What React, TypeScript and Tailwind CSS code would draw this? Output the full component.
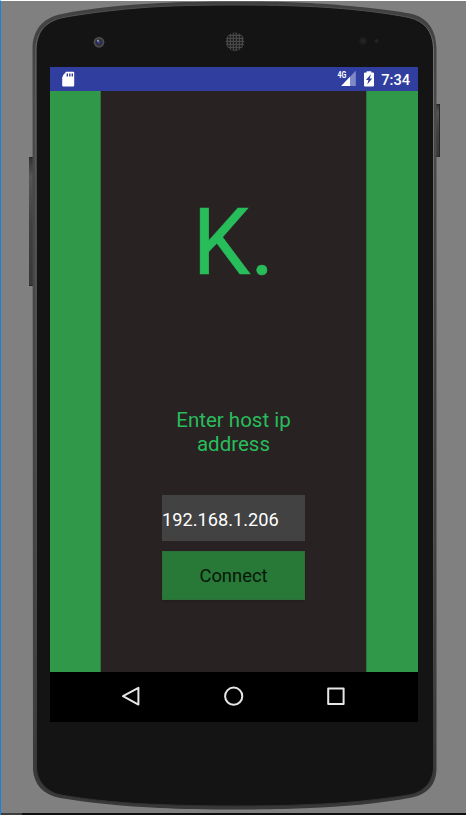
import React from "react";

const outer =
  "M32.5 48 C33 30 42 18 62 14 C90 8 130 4.5 160 3 C200 1 270 1 310 3 C345 5 385 9 410 13.5 C427 17 436 29 436.5 48 L436.5 770 C436 784 428 794 412 797.5 C380 803.5 340 807 310 808 C270 810 200 810 160 808 C125 806.5 90 803 60 798 C43 795 34 784 33 770 Z";
const inner =
  "M36 48 C37 32 45 21.5 63 17.5 C90 12.5 130 8 160 6.5 C200 4.5 270 4.5 310 6.5 C345 8 385 12.5 409 17.5 C424 21 433 31 433.5 48 L433.5 768 C433 781 425 791.5 411 794.5 C380 800 340 803.5 310 804.5 C270 806.5 200 806.5 160 804.5 C125 803.5 90 800 61 795 C46 792 37 781 36.5 768 Z";

function PhoneBody() {
  return (
    <svg className="absolute inset-0" width="466" height="815" viewBox="0 0 466 815" aria-hidden="true">
      <defs>
        <linearGradient id="rim" x1="0" y1="0" x2="0" y2="1">
          <stop offset="0" stopColor="#404040" />
          <stop offset="0.12" stopColor="#4a4a4a" />
          <stop offset="0.8" stopColor="#404040" />
          <stop offset="1" stopColor="#383838" />
        </linearGradient>
        <linearGradient id="edge" x1="0" y1="0" x2="0" y2="1">
          <stop offset="0" stopColor="#4a4a4a" />
          <stop offset="0.05" stopColor="#707072" />
          <stop offset="0.3" stopColor="#6a6a6c" />
          <stop offset="0.7" stopColor="#505050" />
          <stop offset="1" stopColor="#303030" />
        </linearGradient>
        <linearGradient id="key" x1="0" y1="0" x2="0" y2="1">
          <stop offset="0" stopColor="#303030" />
          <stop offset="0.15" stopColor="#555" />
          <stop offset="0.5" stopColor="#404242" />
          <stop offset="1" stopColor="#363838" />
        </linearGradient>
        <pattern id="mesh" width="3" height="3" patternUnits="userSpaceOnUse">
          <rect width="3" height="3" fill="#484848" />
          <rect width="1.8" height="1.8" fill="#191919" />
        </pattern>
        <radialGradient id="lens">
          <stop offset="0" stopColor="#4a52b8" />
          <stop offset="0.35" stopColor="#25274f" />
          <stop offset="0.65" stopColor="#3a3a3c" />
          <stop offset="1" stopColor="#5a5a5a" />
        </radialGradient>
      </defs>
      <rect x="29" y="157" width="4.5" height="129" fill="url(#key)" />
      <path d="M29 157.5h4M29 285.5h4" stroke="#242424" />
      <rect x="436" y="104" width="4" height="53" fill="url(#key)" />
      <path d="M436 104.5h4M436 156h4M439.5 104v53" stroke="#262626" />
      <path d={outer} fill="url(#rim)" />
      <path d={inner} fill="#141414" stroke="url(#edge)" strokeWidth="1" />
      <circle cx="99" cy="42.3" r="5.3" fill="url(#lens)" />
      <circle cx="98" cy="40.7" r="1" fill="#a0a0ae" />
      <circle cx="235" cy="41.7" r="9.3" fill="url(#mesh)" />
      <circle cx="363" cy="41" r="3.8" fill="#1e1e1e" />
      <circle cx="363" cy="41" r="1.8" fill="#252525" />
      <circle cx="376.5" cy="41" r="2" fill="#232323" />
    </svg>
  );
}

function StatusBar() {
  return (
    <div className="flex h-6 shrink-0 items-center bg-[#303f9f] pl-3 pr-2 text-white">
      <svg width="13" height="16" viewBox="0 0 13 16">
        <path d="M4.2 0.7H11.2Q12.2 .7 12.2 1.7V14.4Q12.2 15.4 11.2 15.4H1.2Q.2 15.4 .2 14.4V6L1 5.2V4.2Z" fill="#fff" />
        <path d="M5.3 2.5v3M7.8 2.5v3M10.3 2.5v3" stroke="#303f9f" strokeWidth="1.4" />
      </svg>
      <div className="ml-auto flex h-full items-center">
        <svg width="20" height="24" viewBox="0 0 20 24">
          <path d="M18.8 3.7V19H4.2Z" fill="#7e89c7" />
          <rect x="0" y="3" width="10" height="9.4" fill="#303f9f" />
          <path d="M4.2 19L13 9.8V19Z" fill="#fff" />
          <text x="0.4" y="11.4" textLength="8.8" lengthAdjust="spacingAndGlyphs" fontFamily="Roboto, sans-serif" fontSize="9.8" fontWeight="700" fill="#fff">4G</text>
        </svg>
        <svg className="ml-[7px]" width="10" height="16" viewBox="0 0 10 16">
          <path d="M0 2.5Q0 1.5 1 1.5H2.7V.2H7.3V1.5H9Q10 1.5 10 2.5V14.4Q10 15.4 9 15.4H1Q0 15.4 0 14.4Z" fill="#fff" />
          <path d="M6.9 3.2L1.9 9H4.4L3.3 13.4L8.2 7.4H5.7Z" fill="#303f9f" />
        </svg>
        <span className="ml-[7px] pt-px text-[14.6px] leading-6 font-medium">7:34</span>
      </div>
    </div>
  );
}

function NavBar() {
  return (
    <div className="flex h-[50px] shrink-0 items-center justify-center gap-[78px] bg-black">
      <svg width="24" height="24" viewBox="0 0 24 24" fill="none" stroke="#e6e6e6" strokeWidth="2" strokeLinejoin="round">
        <path d="M3 11.2L18.4 2.8V19.6Z" />
      </svg>
      <svg width="24" height="24" viewBox="0 0 24 24" fill="none" stroke="#e6e6e6" strokeWidth="2">
        <circle cx="11.7" cy="11.2" r="8.6" />
      </svg>
      <svg width="24" height="24" viewBox="0 0 24 24" fill="none" stroke="#e6e6e6" strokeWidth="2" strokeLinejoin="round">
        <rect x="4.2" y="3.4" width="15.4" height="15.6" />
      </svg>
    </div>
  );
}

export default function App() {
  return (
    <div className="relative flex h-[815px] w-[466px] flex-col overflow-hidden border-l border-t border-l-[#1684df] border-t-white bg-[#808080] font-[Roboto,sans-serif]">
      <div className="absolute -left-px -top-px">
        <div className="relative h-[815px] w-[466px]">
          <PhoneBody />
        </div>
      </div>
      <main className="relative ml-[49px] mt-[66px] flex h-[655px] w-[368px] flex-col">
        <StatusBar />
        <div className="flex min-h-0 flex-1 bg-[#2f9849]">
          <div className="ml-[50px] flex w-[267px] flex-col items-center border-x border-[#2b773b] bg-[#292223]">
            <h1 className="mt-[98px] text-[92px] leading-[108px] text-[#28bd5b] [-webkit-text-stroke:0.5px_#28bd5b]">K.</h1>
            <p className="mt-[111px] w-[143px] text-center text-[20.5px] leading-6 text-[#28bd5b]">Enter host ip address</p>
            <input
              aria-label="Host ip address"
              defaultValue="192.168.1.206"
              className="mt-[39px] h-[46px] w-[143px] bg-[#424242] pt-0.5 text-[18.2px] leading-6 text-white outline-none"
            />
            <button className="mt-[10px] h-[49px] w-[143px] border border-[#2c713a] bg-[#287837] pt-px text-[18.4px] text-[#07170a] shadow-sm">
              Connect
            </button>
          </div>
        </div>
        <NavBar />
      </main>
      <div className="relative -ml-px mt-auto h-0.5 w-[466px] bg-[#110e10]">
        <div className="h-full w-[22px] bg-[#3d3d3e]" />
      </div>
    </div>
  );
}
